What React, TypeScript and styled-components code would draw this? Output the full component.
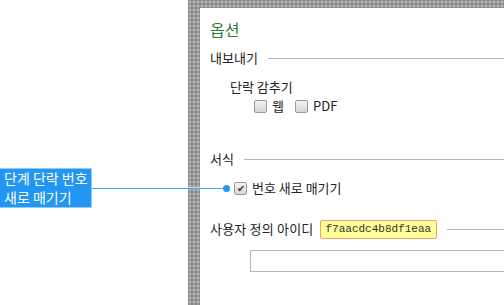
import React from "react";
import styled, { createGlobalStyle } from "styled-components";

const Global = createGlobalStyle`
  html, body { margin: 0; padding: 0; background: #fff; }
  body {
    font-family: "Noto Sans CJK KR", "Noto Sans", sans-serif;
    font-size: 13px;
    color: #222;
  }
`;

const Page = styled.div`
  position: relative;
  display: flex;
  width: 504px;
  height: 305px;
  overflow: hidden;
`;

const Gutter = styled.div`
  width: 188px;
  flex: none;
`;

const Frame = styled.div`
  flex: 1;
  display: flex;
  padding: 8px 0 0 12px;
  background-color: #9b9b9b;
  background-image: radial-gradient(circle, #b4b4b4 0.8px, transparent 1px),
    radial-gradient(circle, #868686 0.8px, transparent 1px);
  background-size: 4px 4px;
  background-position: 0 0, 2px 2px;
`;

const Panel = styled.div`
  flex: 1;
  background: #fff;
  padding: 5px 0 0 10px;
  display: flex;
  flex-direction: column;
`;

const Title = styled.div`
  font-size: 16px;
  color: #2e7d32;
  line-height: 24px;
  height: 24px;
  margin-top: 4px;
`;

const Legend = styled.div<{ $top: number }>`
  display: flex;
  align-items: center;
  gap: 10px;
  height: 20px;
  margin-top: ${(p) => p.$top}px;
  line-height: 20px;
`;

const Rule = styled.div`
  flex: 1;
  height: 1px;
  background: #a9b8c3;
`;

const Label = styled.div<{ $indent: number; $top: number }>`
  padding-left: ${(p) => p.$indent}px;
  margin-top: ${(p) => p.$top}px;
  height: 20px;
  line-height: 20px;
`;

const CheckRow = styled.div<{ $indent: number; $top: number }>`
  display: flex;
  align-items: center;
  gap: 11px;
  padding-left: ${(p) => p.$indent}px;
  margin-top: ${(p) => p.$top}px;
  height: 20px;
`;

const Check = styled.label`
  display: flex;
  align-items: center;
  gap: 5px;
  line-height: 20px;
`;

const Box = styled.span<{ $on?: boolean }>`
  position: relative;
  width: 11px;
  height: 11px;
  border: 1px solid #9a9a9a;
  border-radius: 2px;
  background: linear-gradient(#f4f4f4, #d4d4d4);
  box-sizing: content-box;
  display: flex;
  align-items: center;
  justify-content: center;
  color: #333;
  font-size: 10px;
  line-height: 1;
`;

const Badge = styled.span`
  font-family: "Liberation Mono", "DejaVu Sans Mono", monospace;
  font-size: 11px;
  line-height: 17px;
  padding: 0 5px;
  background: #ffff99;
  border: 1px solid #f0a070;
  border-radius: 2px;
  color: #333;
`;

const IdRow = styled(Legend)`
  gap: 0;
  & > span:first-child { margin-right: 6px; letter-spacing: 0.2px; }
  & > ${Badge} { margin-right: 10px; }
`;

const Input = styled.div`
  margin: 11px 0 0 40px;
  height: 20px;
  border: 1px solid #a9b8c3;
  border-right: none;
`;

const Callout = styled.div`
  position: absolute;
  left: 0;
  top: 168px;
  width: 92px;
  height: 40px;
  box-sizing: border-box;
  background: #2196f3;
  border: 1px solid #90caf9;
  border-left: none;
  color: #fff;
  font-size: 14px;
  line-height: 19px;
  padding: 0 0 0 4px;
  white-space: nowrap;
`;

const Leader = styled.div`
  position: absolute;
  left: 92px;
  top: 188px;
  width: 134px;
  height: 1px;
  background: #42a5f5;
  box-shadow: 0 -1px 0 rgba(255, 255, 255, 0.6);
`;

const Dot = styled.div`
  position: absolute;
  left: 223px;
  top: 185px;
  width: 7px;
  height: 7px;
  border-radius: 50%;
  background: #2196f3;
`;

export default function App() {
  return (
    <Page>
      <Global />
      <Gutter />
      <Frame>
        <Panel>
          <Title>옵션</Title>
          <Legend $top={7}>
            <span>내보내기</span>
            <Rule />
          </Legend>
          <Label $indent={20} $top={9}>단락 감추기</Label>
          <CheckRow $indent={44} $top={-1}>
            <Check>
              <Box />
              <span>웹</span>
            </Check>
            <Check>
              <Box />
              <span>PDF</span>
            </Check>
          </CheckRow>
          <Legend $top={33}>
            <span>서식</span>
            <Rule />
          </Legend>
          <CheckRow $indent={24} $top={9}>
            <Check>
              <Box $on>✔</Box>
              <span>번호 새로 매기기</span>
            </Check>
          </CheckRow>
          <IdRow $top={21}>
            <span>사용자 정의 아이디</span>
            <Badge>f7aacdc4b8df1eaa</Badge>
            <Rule />
          </IdRow>
          <Input />
        </Panel>
      </Frame>
      <Callout>
        단계 단락 번호
        <br />
        새로 매기기
      </Callout>
      <Leader />
      <Dot />
    </Page>
  );
}
